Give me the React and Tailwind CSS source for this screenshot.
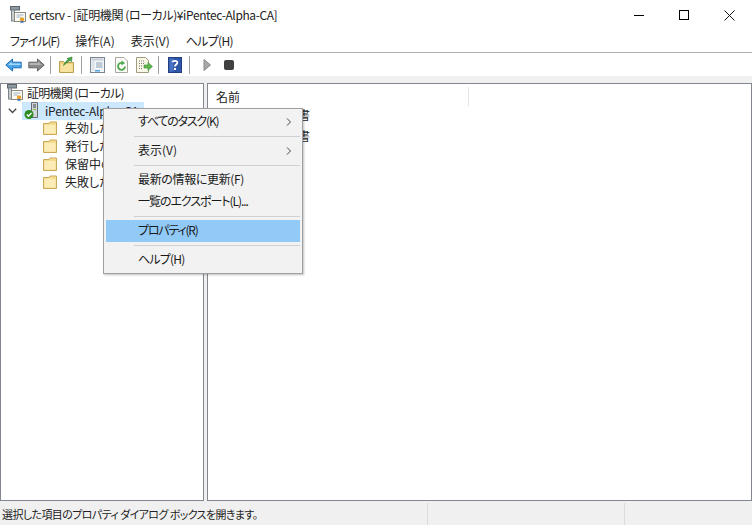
const font = { fontFamily: '"Noto Sans CJK JP", "Noto Sans", sans-serif' };

function Sep() {
  return <div className="mx-[3px] h-[18px] w-px bg-[#a0a0a0]" />;
}

function Folder() {
  return (
    <svg width="16" height="16" viewBox="0 0 16 16" className="shrink-0">
      <path d="M1.500 3.500h5.500l1-1.500h6.500v12.500h-13z" fill="#f6dc8e" stroke="#c8a85a" />
      <path d="M2.500 5h11v8.500h-11z" fill="#fcecb8" />
    </svg>
  );
}

function CertIcon() {
  return (
    <svg width="18" height="18" viewBox="0 0 18 18" className="shrink-0">
      <rect x="1.5" y="0.5" width="9" height="3.5" fill="#8d9aa3" stroke="#5d666c" />
      <rect x="2.5" y="4" width="3" height="11" fill="#c8cdd0" stroke="#7b8288" />
      <rect x="5.5" y="6.5" width="11" height="9" fill="#fbfbf4" stroke="#8a8a80" />
      <path d="M7.5 9h7M7.5 11h4" stroke="#9fb0c4" />
      <circle cx="13" cy="13.5" r="2.2" fill="#e8a02a" />
      <path d="M12 15l-.6 2.5 1.6-1 1.6 1-.6-2.5" fill="#3a6fb8" />
    </svg>
  );
}

function ServerOkIcon() {
  return (
    <svg width="16" height="18" viewBox="0 0 16 18" className="shrink-0">
      <path d="M7.5.5h6v15h-6z" fill="#d2d6d8" stroke="#666c70" />
      <path d="M9 3h3M9 5h3" stroke="#444" />
      <rect x="9" y="7" width="3" height="1" fill="#7cc03c" />
      <circle cx="5" cy="12.5" r="4.5" fill="#2e8b22" />
      <path d="M2.8 12.5l1.7 1.8 3-3.4" stroke="#fff" strokeWidth="1.4" fill="none" />
    </svg>
  );
}

function BackIcon() {
  return (
    <svg width="17" height="14" viewBox="0 0 17 14">
      <path d="M.8 7L7.5 1v3.2h8.7v5.6H7.5V13z" fill="#4aa5e8" stroke="#1c6cb4" />
      <path d="M3 7l3.5-3.2v1.6h9V7z" fill="#a5d8f8" />
    </svg>
  );
}

function ForwardIcon() {
  return (
    <svg width="17" height="14" viewBox="0 0 17 14">
      <path d="M16.2 7L9.5 1v3.2H.8v5.6h8.7V13z" fill="#8a8a8a" stroke="#666" />
      <path d="M1.5 5h8.5V3.2L13.5 7H1.5z" fill="#b4b4b4" />
    </svg>
  );
}

function UpIcon() {
  return (
    <svg width="15" height="17" viewBox="0 0 15 17">
      <path d="M.5 5.500h4l1 1h9v10H.5z" fill="#f0d080" stroke="#b8a050" />
      <path d="M1.500 8h12v8h-12z" fill="#f8e2a0" />
      <path d="M4.500 9.500c1-3 3-5 5-6L8 2.500 13 1l-.5 4.500L11 4.500c-2 1-4 3-6.500 5z" fill="#4aa84a" stroke="#2c7a2c" strokeWidth="0.6" />
    </svg>
  );
}

function ConsoleIcon() {
  return (
    <svg width="15" height="16" viewBox="0 0 15 16">
      <rect x="0.500" y="0.500" width="14" height="15" fill="#f2f4f6" stroke="#7a8590" />
      <rect x="1.500" y="1.500" width="12" height="2" fill="#c4ccd4" />
      <rect x="1.500" y="3.500" width="3" height="10" fill="#dde2e8" />
      <path d="M6 6h6.500M6 8h6.500M6 10h6.500" stroke="#8ca0b8" />
      <rect x="5" y="13" width="5" height="1.500" fill="#4aa5e8" />
    </svg>
  );
}

function RefreshIcon() {
  return (
    <svg width="13" height="16" viewBox="0 0 13 16">
      <path d="M.5.500h8.500l3.500 3.500v11.500H.5z" fill="#fbfbf8" stroke="#a8a8a0" />
      <path d="M10 9.500A3.500 3.500 0 1 1 7.500 6" fill="none" stroke="#4aa84a" strokeWidth="1.800" />
      <path d="M6.500 3.500l3.500 2.500-3.500 2.500z" fill="#4aa84a" />
    </svg>
  );
}

function ExportIcon() {
  return (
    <svg width="17" height="16" viewBox="0 0 17 16">
      <path d="M.5.500h9l3 3v12H.5z" fill="#fbf8e8" stroke="#a09a80" />
      <path d="M3 4h5M3 6.500h5M3 9h4M3 11.500h4" stroke="#777" strokeDasharray="1 1" />
      <path d="M8 8h4V5.500L16.500 9.500 12 13.500V11H8z" fill="#5cb84c" stroke="#3c8a30" strokeWidth="0.6" />
    </svg>
  );
}

function HelpIcon() {
  return (
    <svg width="14" height="16" viewBox="0 0 14 16">
      <rect x="0.500" y="0.500" width="13" height="15" fill="#2f55a8" stroke="#23407e" />
      <rect x="1.500" y="1.500" width="4" height="13" fill="#4a72c4" />
      <path d="M4.500 5.200C4.700 3.500 9.300 3.500 9.400 5.500 9.400 7.500 7 7.500 7 9.500" fill="none" stroke="#fff" strokeWidth="1.800" />
      <rect x="6" y="11" width="2" height="2" fill="#fff" />
    </svg>
  );
}

function PlayIcon() {
  return (
    <svg width="8" height="12" viewBox="0 0 8 12">
      <path d="M1 .5L7.500 6 1 11.500z" fill="#a8a8a8" stroke="#8a8a8a" />
    </svg>
  );
}

function StopIcon() {
  return <div className="h-[10px] w-[10px] rounded-[2px] bg-[#404040]" />;
}

function Chevron() {
  return (
    <svg width="6" height="8" viewBox="0 0 6 8" className="absolute right-[8px] top-[7px]">
      <path d="M1 .5L4.500 4 1 7.500" fill="none" stroke="#444" />
    </svg>
  );
}

function MenuItem({ children, sub, active, tracking }) {
  return (
    <div className={`relative mx-[2px] flex h-[22px] items-center pb-[2px] pl-[32px] text-[12px] leading-none text-[#1a1a1a] ${active ? "bg-[#91c9f7]" : ""}`}>
      <span className={tracking}>{children}</span>
      {sub && <Chevron />}
    </div>
  );
}

function MenuSep() {
  return <div className="my-[3px] ml-[30px] mr-[2px] h-px bg-[#d0d0d0]" />;
}

function TreeChild({ label }) {
  return (
    <div className="flex h-[18px] items-center gap-[7px] pl-[41px] text-[12px] leading-none text-[#222]">
      <Folder />
      <span className="whitespace-nowrap">{label}</span>
    </div>
  );
}

export default function App() {
  return (
    <div style={font} className='relative flex h-[525px] w-[752px] flex-col overflow-hidden bg-white text-black [font-feature-settings:"palt"]'>
      <div className="flex h-[30px] shrink-0 items-center pl-[9px]">
        <CertIcon />
        <span className="ml-[2px] text-[12px] leading-none tracking-[-0.4px] text-[#222]">certsrv - [証明機関 (ローカル)¥iPentec-Alpha-CA]</span>
        <div className="ml-auto flex items-center gap-[35px] pr-[17px]">
          <div className="h-px w-[10px] bg-black" />
          <div className="h-[10px] w-[10px] border border-black" />
          <svg width="11" height="11" viewBox="0 0 11 11">
            <path d="M.5.500l10 10M10.500.500l-10 10" stroke="#111" fill="none" />
          </svg>
        </div>
      </div>

      <div className="flex h-[22px] shrink-0 items-center gap-[16px] pl-[10px] text-[12px] leading-none text-[#222]">
        <span className="tracking-[-1px]">ファイル(F)</span>
        <span>操作(A)</span>
        <span>表示(V)</span>
        <span className="tracking-[-0.7px]">ヘルプ(H)</span>
      </div>

      <div className="flex h-[24px] shrink-0 items-center border-t border-[#b0b0b0] pl-[5px]">
        <BackIcon />
        <div className="w-[6px]" />
        <ForwardIcon />
        <div className="w-[2px]" />
        <Sep />
        <div className="w-[5px]" />
        <UpIcon />
        <div className="w-[4px]" />
        <Sep />
        <div className="w-[5px]" />
        <ConsoleIcon />
        <div className="w-[10px]" />
        <RefreshIcon />
        <div className="w-[8px]" />
        <ExportIcon />
        <div className="w-[2px]" />
        <Sep />
        <div className="w-[6px]" />
        <HelpIcon />
        <div className="w-[4px]" />
        <Sep />
        <div className="w-[10px]" />
        <PlayIcon />
        <div className="w-[13px]" />
        <StopIcon />
      </div>

      <div className="flex min-h-0 flex-1 gap-[3px] bg-[#f0f0f0] pt-[7px] pb-[2px]">
        <div className="w-[204px] shrink-0 border border-[#828790] bg-white">
          <div className="flex h-[18px] items-center gap-[3px] pl-[5px] text-[12px] leading-none text-[#222]">
            <CertIcon />
            <span className="tracking-[-0.7px]">証明機関 (ローカル)</span>
          </div>
          <div className="flex h-[18px] items-center">
            <svg width="9" height="6" viewBox="0 0 9 6" className="ml-[7px]">
              <path d="M.8.800L4.500 4.500 8.200.800" fill="none" stroke="#444" strokeWidth="1.300" />
            </svg>
            <div className="ml-[5px] flex h-[18px] w-[122px] items-center bg-[#cce8ff] pl-[2px] text-[12px] leading-none text-[#222]">
              <ServerOkIcon />
              <span className="ml-[5px] whitespace-nowrap tracking-[-0.2px]">iPentec-Alpha-CA</span>
            </div>
          </div>
          <div className="-mt-[1px]">
            <TreeChild label="失効した証明書" />
            <TreeChild label="発行した証明書" />
            <TreeChild label="保留中の要求" />
            <TreeChild label="失敗した要求" />
          </div>
        </div>

        <div className="flex-1 border border-[#828790] bg-white">
          <div className="flex h-[22px] pt-[3px] text-[12px] leading-none text-[#222]">
            <div className="flex w-[261px] items-center border-r border-[#e5e5e5] pl-[8px]">名前</div>
          </div>
          <div className="flex h-[18px] items-center gap-[5px] pl-[6px] text-[12px] leading-none text-[#222]">
            <Folder />
            <span className="tracking-[-1.1px]">失効した証明書</span>
          </div>
          <div className="mt-[3px] flex h-[18px] items-center gap-[5px] pl-[6px] text-[12px] leading-none text-[#222]">
            <Folder />
            <span className="tracking-[-1.1px]">発行した証明書</span>
          </div>
        </div>
      </div>

      <div className="flex h-[22px] shrink-0 bg-[#f0f0f0] text-[11px] leading-none text-[#222]">
        <div className="flex w-[428px] items-center whitespace-pre border-r border-[#dcdcdc] pl-[2px] tracking-[-0.6px]">
          選択した項目のプロパティ ダイアログ ボックスを開きます。
        </div>
        <div className="w-[197px] border-r border-[#dcdcdc]" />
      </div>

      <div className="absolute left-[103px] top-[108px] w-[200px] border border-[#a0a0a0] bg-[#f2f2f2] py-[2px] shadow-[1px_1px_2px_rgba(0,0,0,0.25)]">
        <MenuItem sub tracking="tracking-[-1.2px]">すべてのタスク(K)</MenuItem>
        <MenuSep />
        <MenuItem sub>表示(V)</MenuItem>
        <MenuSep />
        <MenuItem tracking="tracking-[-0.35px]">最新の情報に更新(F)</MenuItem>
        <MenuItem tracking="tracking-[-1.05px]">一覧のエクスポート(L)...</MenuItem>
        <MenuSep />
        <MenuItem active tracking="tracking-[-1.2px]">プロパティ(R)</MenuItem>
        <MenuSep />
        <MenuItem tracking="tracking-[-0.8px]">ヘルプ(H)</MenuItem>
      </div>
    </div>
  );
}
